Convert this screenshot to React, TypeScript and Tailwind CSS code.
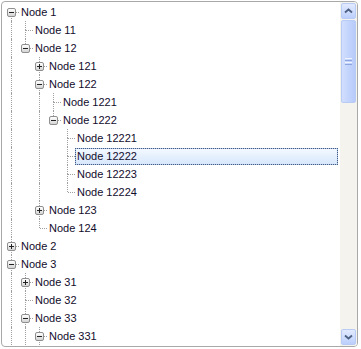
import React from "react";

type TreeNode = { label: string; open?: boolean; selected?: boolean; children?: TreeNode[] };

const tree: TreeNode[] = [
  {
    label: "Node 1",
    open: true,
    children: [
      { label: "Node 11" },
      {
        label: "Node 12",
        open: true,
        children: [
          { label: "Node 121", children: [{ label: "Node 1211" }] },
          {
            label: "Node 122",
            open: true,
            children: [
              { label: "Node 1221" },
              {
                label: "Node 1222",
                open: true,
                children: [
                  { label: "Node 12221" },
                  { label: "Node 12222", selected: true },
                  { label: "Node 12223" },
                  { label: "Node 12224" },
                ],
              },
            ],
          },
          { label: "Node 123", children: [{ label: "Node 1231" }] },
          { label: "Node 124" },
        ],
      },
    ],
  },
  { label: "Node 2", children: [{ label: "Node 21" }] },
  {
    label: "Node 3",
    open: true,
    children: [
      { label: "Node 31", children: [{ label: "Node 311" }] },
      { label: "Node 32" },
      {
        label: "Node 33",
        open: true,
        children: [
          { label: "Node 331", open: true, children: [{ label: "Node 3311" }, { label: "Node 3312" }] },
          { label: "Node 332" },
        ],
      },
      { label: "Node 34" },
    ],
  },
  { label: "Node 4" },
];

type Row = { node: TreeNode; rails: boolean[]; last: boolean; first: boolean };

function flatten(nodes: TreeNode[], rails: boolean[], out: Row[]) {
  nodes.forEach((node, i) => {
    const last = i === nodes.length - 1;
    out.push({ node, rails, last, first: rails.length === 0 && i === 0 });
    if (node.open && node.children) flatten(node.children, [...rails, !last], out);
  });
  return out;
}

// only the rows that fit in the viewport are drawn
const rows = flatten(tree, [], []).slice(0, 19);

function Expander({ open }: { open?: boolean }) {
  return (
    <span className="absolute left-[3px] top-[5px] flex h-[9px] w-[9px] items-center justify-center rounded-[2px] border border-[#8f8f8f] bg-gradient-to-b from-white to-[#d4d4d4]">
      <span className="absolute left-[1px] top-[3px] h-px w-[5px] bg-[#222]" />
      {!open && <span className="absolute left-[3px] top-[1px] h-[5px] w-px bg-[#222]" />}
    </span>
  );
}

function TreeRow({ row }: { row: Row }) {
  const { node, rails, last, first } = row;
  const hasKids = !!node.children;
  return (
    <div className="flex h-[18px] items-stretch">
      {rails.map((on, i) => (
        <span key={i} className="relative w-[14px] shrink-0">
          {on && <span className="absolute left-[7px] top-0 h-full border-l border-dotted border-[#a0a0a0]" />}
        </span>
      ))}
      <span className="relative w-[14px] shrink-0">
        {!first && <span className="absolute left-[7px] top-0 h-[9px] border-l border-dotted border-[#a0a0a0]" />}
        {!last && <span className="absolute bottom-0 left-[7px] top-[9px] border-l border-dotted border-[#a0a0a0]" />}
        <span className="absolute left-[8px] top-[9px] w-[7px] border-t border-dotted border-[#a0a0a0]" />
        {hasKids && <Expander open={node.open} />}
      </span>
      {node.selected ? (
        <span className="ml-[1px] mr-[2px] mt-px h-[17px] flex-1 border border-[#a7c7f1] bg-gradient-to-b from-[#f3f8fe] to-[#d8e8fc] pl-px leading-[15px] outline-1 -outline-offset-1 outline-dotted outline-[#4a5a78]">
          {node.label}
        </span>
      ) : (
        <span className="ml-[1px] whitespace-nowrap pl-[2px] leading-[18px]">{node.label}</span>
      )}
    </div>
  );
}

function Chevron({ down }: { down?: boolean }) {
  return (
    <svg width="9" height="6" viewBox="0 0 9 6">
      <path d={down ? "M1 1.5 L4.5 4.5 L8 1.5" : "M1 4.5 L4.5 1.5 L8 4.5"} fill="none" stroke="#4d6185" strokeWidth="1.8" />
    </svg>
  );
}

export default function App() {
  return (
    <div className="pl-[1px] pt-[1px]">
      <div className="flex h-[346px] w-[357px] overflow-hidden rounded-[4px] border border-[#a9a9a9] bg-white font-['Liberation_Sans',Arial,sans-serif] text-[11px] text-[#120c2c]">
        <div className="flex-1 overflow-hidden pl-[2px] pt-px">
          {rows.map((r, i) => (
            <TreeRow key={i} row={r} />
          ))}
        </div>
        <div className="flex w-[17px] shrink-0 flex-col bg-[#f4f3ee] p-px">
          <div className="flex h-[16px] items-center justify-center rounded-[2px] border border-[#b7cbf5] bg-gradient-to-b from-[#e2eafe] to-[#bccffb]">
            <Chevron />
          </div>
          <div className="mt-px flex h-[83px] items-center justify-center rounded-[2px] border border-[#b7cbf5] bg-gradient-to-r from-[#d2defd] via-[#c3d4fc] to-[#b8cbfa]">
            <div className="flex flex-col gap-px">
              <span className="h-px w-[7px] bg-[#eef3ff]" />
              <span className="h-px w-[7px] bg-[#8ca5e0]" />
              <span className="h-px w-[7px] bg-[#eef3ff]" />
              <span className="h-px w-[7px] bg-[#8ca5e0]" />
            </div>
          </div>
          <div className="flex-1" />
          <div className="flex h-[16px] items-center justify-center rounded-[2px] border border-[#b7cbf5] bg-gradient-to-b from-[#e2eafe] to-[#bccffb]">
            <Chevron down />
          </div>
        </div>
      </div>
    </div>
  );
}
